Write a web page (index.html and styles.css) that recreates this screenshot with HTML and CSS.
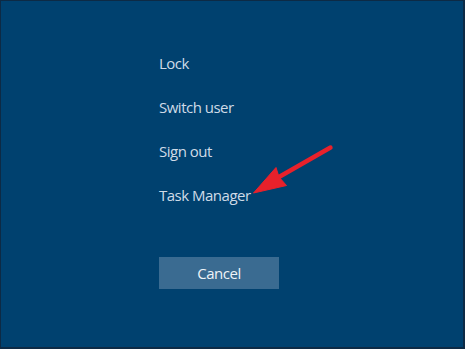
FILE: index.html
```html
<!DOCTYPE html>
<html>
<head>
<meta charset="utf-8">
<link rel="stylesheet" href="styles.css">
</head>
<body>
<div class="screen">
  <ul class="menu">
    <li class="item">Lock</li>
    <li class="item">Switch user</li>
    <li class="item">Sign out</li>
    <li class="item">Task Manager</li>
  </ul>
  <button class="cancel">Cancel</button>
  <svg class="arrow" width="465" height="349" viewBox="0 0 465 349">
    <line x1="330.5" y1="147.5" x2="272" y2="181" stroke="#e8212b" stroke-width="4.4" stroke-linecap="round"/>
    <polygon points="253.5,193 276,167.5 279,177 286.5,185.5" fill="#e8212b" stroke="#e8212b" stroke-width="1" stroke-linejoin="round"/>
  </svg>
</div>
</body>
</html>
```
FILE: styles.css
```css
html, body {
  margin: 0;
  padding: 0;
  background: #0b2a4a;
}
.screen {
  position: relative;
  box-sizing: border-box;
  width: 465px;
  height: 349px;
  background: #00416f;
  border-left: 1px solid #0d2a45;
  border-top: 1px solid #0d2a45;
  border-right: 2px solid #0d2a45;
  border-bottom: 2px solid #0d2a45;
  padding: 52px 0 0 158px;
  font-family: "Open Sans", "Noto Sans", sans-serif;
}
.menu {
  list-style: none;
  margin: 0;
  padding: 0;
  display: flex;
  flex-direction: column;
  gap: 24px;
}
.item {
  font-size: 15px;
  line-height: 20px;
  letter-spacing: -0.5px;
  color: #cfdbe7;
}
.cancel {
  display: block;
  margin-top: 52px;
  width: 120px;
  height: 32px;
  border: none;
  padding: 0;
  background: #3a6b91;
  color: #eef3f8;
  font-family: "Open Sans", "Noto Sans", sans-serif;
  font-size: 15px;
  line-height: 20px;
  letter-spacing: -0.5px;
}
.arrow {
  position: absolute;
  left: -1px;
  top: -1px;
  pointer-events: none;
}
```
